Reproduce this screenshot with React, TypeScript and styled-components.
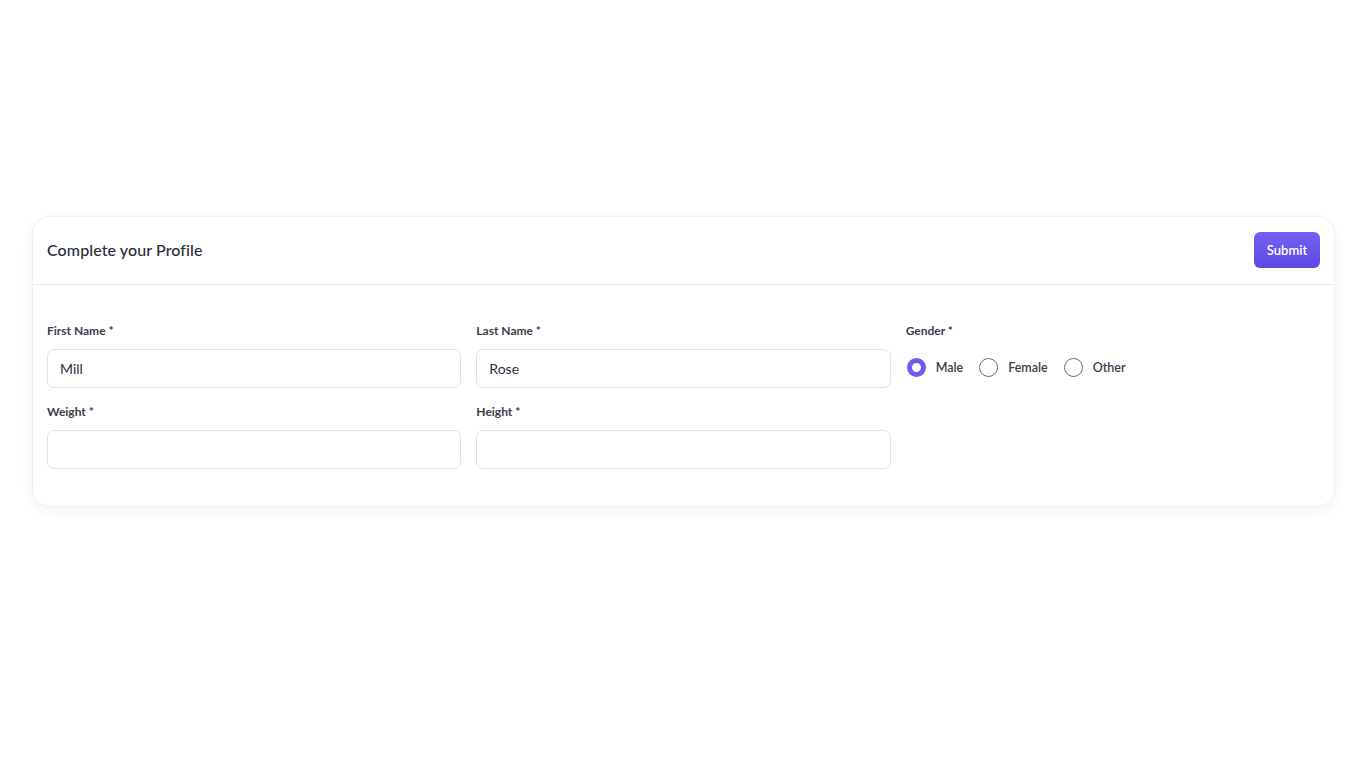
import React, { useState } from 'react';
import styled, { createGlobalStyle } from 'styled-components';

const GlobalStyle = createGlobalStyle`
  html, body {
    margin: 0;
    padding: 0;
    background: #ffffff;
    font-family: Lato, "Open Sans", Arial, sans-serif;
    color: #2c2f3c;
  }
  * { box-sizing: border-box; }
`;

const Page = styled.div`
  padding: 216px 31px 0 32px;
  min-height: 100vh;
`;

const Card = styled.div`
  background: #fff;
  border: 1px solid #f0f0f3;
  border-radius: 18px;
  box-shadow: 0 4px 14px rgba(30, 30, 60, 0.05);
`;

const Header = styled.div`
  height: 68px;
  display: flex;
  align-items: center;
  justify-content: space-between;
  padding: 0 14px 1px 14px;
  border-bottom: 1px solid #ebebee;
`;

const Title = styled.h2`
  margin: 0 0 2px 0;
  font-size: 16px;
  font-weight: 500;
  color: #2a2d3a;
  letter-spacing: 0.1px;
`;

const SubmitButton = styled.button`
  width: 66px;
  height: 36px;
  border: none;
  border-radius: 6px;
  background: linear-gradient(180deg, #7460f2 0%, #5c49e4 100%);
  color: #fff;
  font-family: inherit;
  font-size: 13px;
  font-weight: 600;
  cursor: pointer;
`;

const Body = styled.div`
  padding: 37px 14px 37px 14px;
  display: grid;
  grid-template-columns: repeat(3, 1fr);
  column-gap: 15px;
  row-gap: 15px;
`;

const Field = styled.div`
  display: flex;
  flex-direction: column;
`;

const Label = styled.label`
  font-size: 12px;
  font-weight: 700;
  color: #3a3d4a;
  line-height: 16px;
  margin-top: 1px;
  margin-bottom: 10px;
`;

const Input = styled.input`
  height: 39px;
  border: 1px solid #e2e2e6;
  border-radius: 7px;
  padding: 0 12px;
  font-family: inherit;
  font-size: 14px;
  color: #2c2f3c;
  outline: none;
  background: #fff;
`;

const RadioRow = styled.div`
  display: flex;
  align-items: center;
  gap: 16px;
  height: 37px;
  padding-left: 1px;
`;

const RadioOption = styled.label`
  display: flex;
  align-items: center;
  gap: 10px;
  font-size: 12.5px;
  font-weight: 600;
  color: #3a3d4a;
  cursor: pointer;
`;

const RadioCircle = styled.span<{ $checked: boolean }>`
  width: 19px;
  height: 19px;
  border-radius: 50%;
  border: ${p => (p.$checked ? '5px solid #6c5cf0' : '1.6px solid #676a7a')};
  background: #fff;
  display: inline-block;
`;

const HiddenRadio = styled.input`
  display: none;
`;

export default function App() {
  const [gender, setGender] = useState('Male');
  const [first, setFirst] = useState('Mill');
  const [last, setLast] = useState('Rose');
  const [weight, setWeight] = useState('');
  const [height, setHeight] = useState('');

  return (
    <>
      <GlobalStyle />
      <Page>
        <Card>
          <Header>
            <Title>Complete your Profile</Title>
            <SubmitButton>Submit</SubmitButton>
          </Header>
          <Body>
            <Field>
              <Label>First Name *</Label>
              <Input value={first} onChange={e => setFirst(e.target.value)} />
            </Field>
            <Field>
              <Label>Last Name *</Label>
              <Input value={last} onChange={e => setLast(e.target.value)} />
            </Field>
            <Field>
              <Label>Gender *</Label>
              <RadioRow>
                {['Male', 'Female', 'Other'].map(g => (
                  <RadioOption key={g}>
                    <HiddenRadio
                      type="radio"
                      name="gender"
                      checked={gender === g}
                      onChange={() => setGender(g)}
                    />
                    <RadioCircle $checked={gender === g} />
                    {g}
                  </RadioOption>
                ))}
              </RadioRow>
            </Field>
            <Field>
              <Label>Weight *</Label>
              <Input value={weight} onChange={e => setWeight(e.target.value)} />
            </Field>
            <Field>
              <Label>Height *</Label>
              <Input value={height} onChange={e => setHeight(e.target.value)} />
            </Field>
          </Body>
        </Card>
      </Page>
    </>
  );
}
